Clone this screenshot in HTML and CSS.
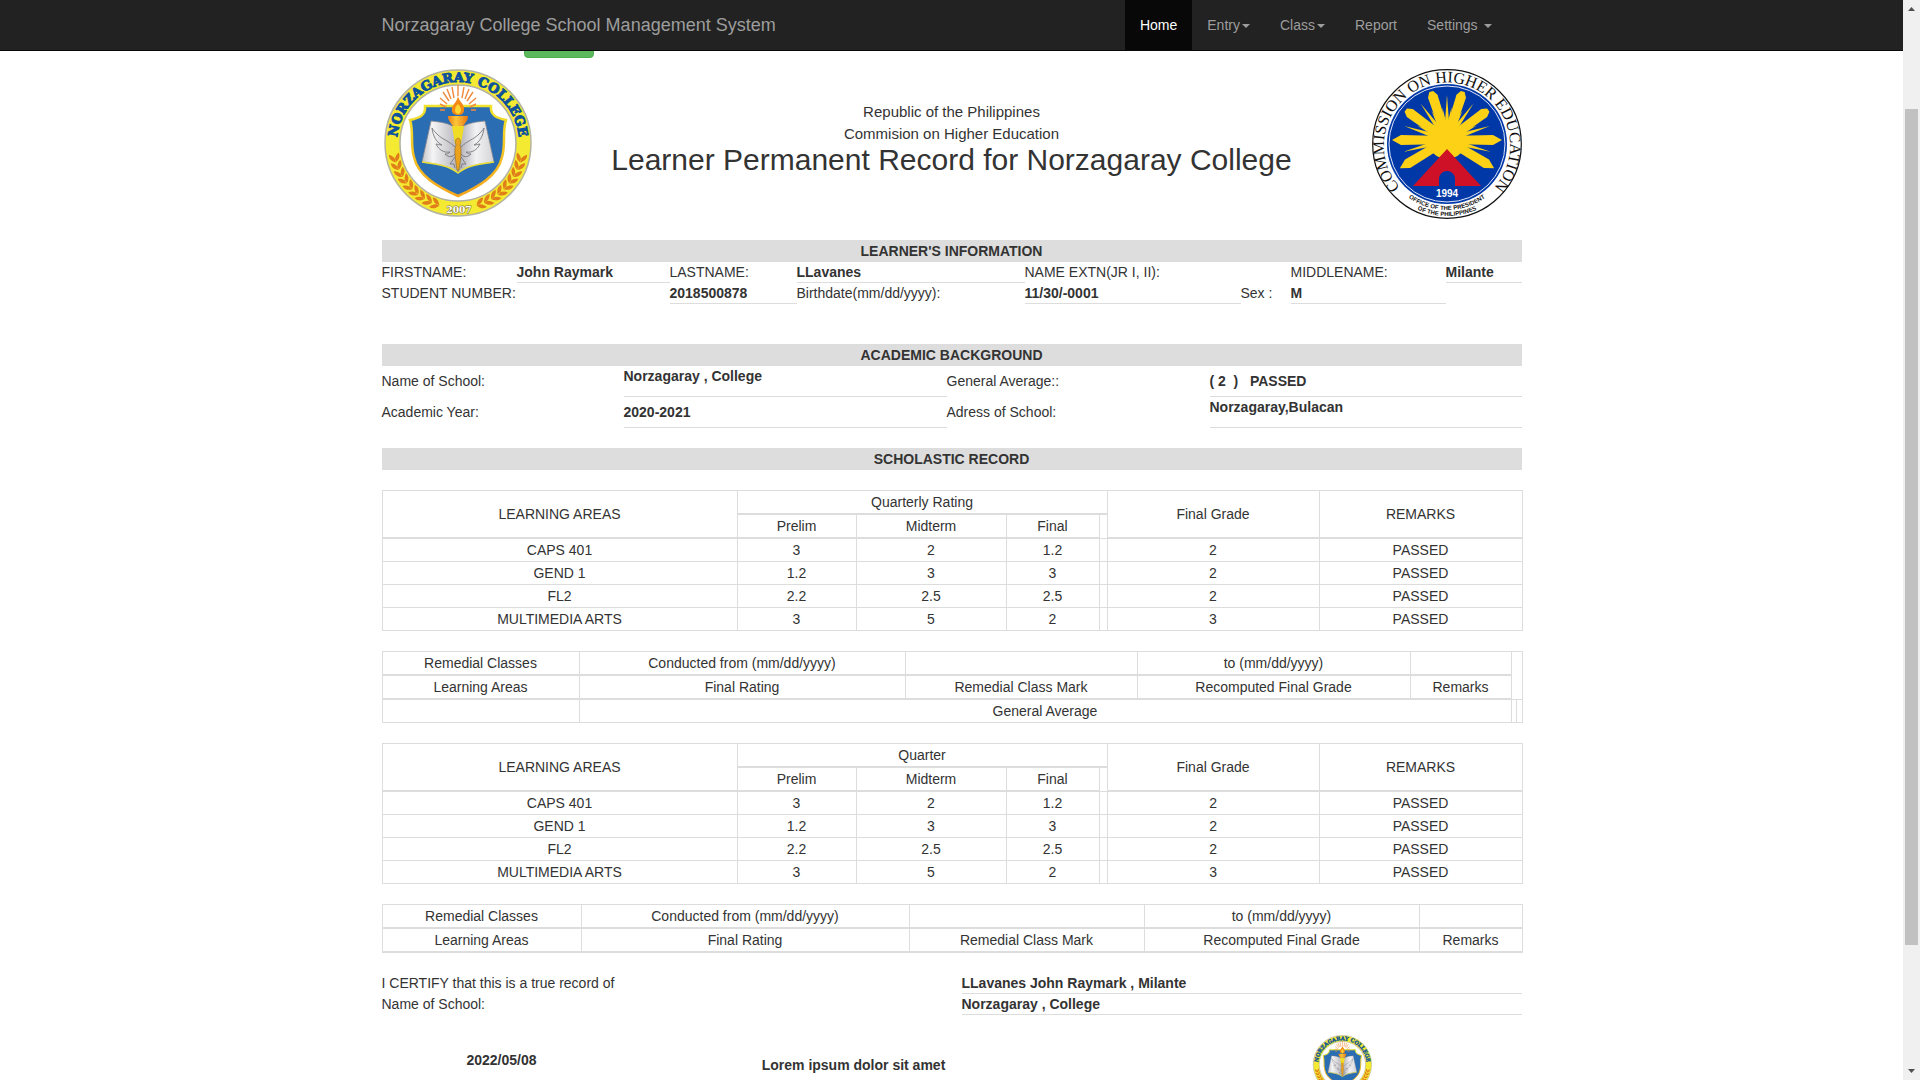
FILE: index.html
```html
<!DOCTYPE html>
<html lang="en">
<head>
<meta charset="utf-8">
<meta name="viewport" content="width=device-width, initial-scale=1">
<title>Norzagaray College School Management System</title>
<link rel="stylesheet" href="styles.css">
</head>
<body>
<svg class="defs" aria-hidden="true">
  <defs>
    <path id="nc-arc" d="M15 78L15 74A61 61 0 0 1 137 74L137 78"/>
    <linearGradient id="page-l" x1="0" x2="1"><stop offset="0" stop-color="#c4c4c8"/><stop offset=".3" stop-color="#f4f4f5"/><stop offset="1" stop-color="#b4b4ba"/></linearGradient>
    <linearGradient id="page-r" x1="0" x2="1"><stop offset="0" stop-color="#a9a9b0"/><stop offset=".5" stop-color="#f2f2f4"/><stop offset="1" stop-color="#d4d4d8"/></linearGradient>
    <linearGradient id="gold" x1="0" x2="0" y1="0" y2="1"><stop offset="0" stop-color="#f0e32c"/><stop offset="1" stop-color="#f6a51c"/></linearGradient>
    <linearGradient id="cup" x1="0" x2="1"><stop offset="0" stop-color="#ef7d12"/><stop offset=".4" stop-color="#fcc63a"/><stop offset="1" stop-color="#e87511"/></linearGradient>
    <g id="leaf">
      <path d="M6 70C5 74 7 77 11 79C12 76 10 72 6 70ZM16 70C17 74 15 77 11 79C10 76 12 72 16 70Z" fill="#e07f1a"/>
    </g>
    <g id="laurel">
      <use href="#leaf" transform="rotate(-13 76 74)"/><use href="#leaf" transform="rotate(-20 76 74)"/>
      <use href="#leaf" transform="rotate(-27 76 74)"/><use href="#leaf" transform="rotate(-34 76 74)"/>
      <use href="#leaf" transform="rotate(-41 76 74)"/><use href="#leaf" transform="rotate(-48 76 74)"/>
      <use href="#leaf" transform="rotate(-55 76 74)"/><use href="#leaf" transform="rotate(-62 76 74)"/>
      <use href="#leaf" transform="rotate(-69 76 74)"/>
    </g>
    <g id="half-rays" stroke="#f08a3c" stroke-width="1.400">
      <path d="M72 29L70 18M69 30L65 20M67 32L61 23M65 35L58 29M64 38L58 35M63 41L58 41"/>
    </g>
    <g id="wing" fill="none" stroke="#77777e" stroke-width=".9">
      <path d="M73 78C67 72 60 70 56 66C53 63 51 61 50 59C51 67 54 73 60 76C57 76 55 75 54 75C57 81 62 84 68 83C66 85 65 85 63 85C67 89 71 88 73 85M73 88L68 95L72 95L73 99"/>
    </g>
    <symbol id="nc-seal" viewBox="0 0 150 150">
      <circle cx="76" cy="74" r="73" fill="#f3ea31" stroke="#b5b4a0" stroke-width="1.500"/>
      <circle cx="76" cy="74" r="58" fill="#fff" stroke="#b3b1a4" stroke-width="1.500"/>
      <path d="M43 37H109C108 46 114 49 124 51C120 63 124 75 120 88C116 107 96 118 76 127C56 118 36 107 32 88C28 75 32 63 28 51C38 49 44 46 43 37Z" fill="#2a6db2" stroke="url(#gold)" stroke-width="2.500"/>
      <path d="M76 61C67 53 57 53 49 52L40 93C53 95 66 96 76 104Z" fill="url(#page-l)" stroke="#85858c" stroke-width=".8"/>
      <path d="M76 61C85 53 95 53 103 52L112 93C99 95 86 96 76 104Z" fill="url(#page-r)" stroke="#85858c" stroke-width=".8"/>
      <path d="M40 93C53 95 66 96 76 104C86 96 99 95 112 93" fill="none" stroke="#e9df35" stroke-width="1.500"/>
      <use href="#half-rays"/><use href="#half-rays" transform="matrix(-1 0 0 1 152 0)"/>
      <path d="M76 16V27" stroke="#f08a3c" stroke-width="1.400"/>
      <path d="M70 57H82L79 75H73Z" fill="#f0dc25"/>
      <use href="#wing"/><use href="#wing" transform="matrix(-1 0 0 1 152 0)"/>
      <path d="M76 69C79 70 79 73 78 76C80 80 79 88 77 101H75C73 88 72 80 74 76C73 73 73 70 76 69Z" fill="#eba21c" stroke="#8a6a25" stroke-width=".6"/>
      <path d="M66 47H86C86 52 83 54 81 57H71C69 54 66 52 66 47Z" fill="url(#cup)"/>
      <path d="M76 27C77 33 83 35 82 41C82 45 79 46 76 46C72 46 69 44 70 39C71 35 75 33 76 27Z" fill="#f58a14"/>
      <path d="M76 35C80 39 80 44 76 45C72 44 72 39 76 35Z" fill="#fcd733"/>
      <use href="#laurel"/><use href="#laurel" transform="matrix(-1 0 0 1 152 0)"/>
      <text class="nc-name"><textPath href="#nc-arc" startOffset="50%">NORZAGARAY COLLEGE</textPath></text>
      <text class="nc-year" x="77" y="144">2007</text>
    </symbol>
    <path id="ched-arc" d="M26 116A63 63 0 1 1 124 116"/>
    <path id="ched-low1" d="M9 75A66 66 0 0 0 141 75"/>
    <path id="ched-low2" d="M3 75A72 72 0 0 0 147 75"/>
    <path id="ray" d="M71 70L70 25L75 16L80 25L79 70Z"/>
    <path id="ray-short" d="M71 70L70 25L73 20H77L80 25L79 70Z"/>
    <path id="spike" d="M72 66L75 26L78 66Z"/>
    <path id="spike-short" d="M72 66L75 38L78 66Z"/>
    <symbol id="ched-seal" viewBox="0 0 150 150">
      <circle cx="75" cy="75" r="74.300" fill="#fff" stroke="#111" stroke-width="1.200"/>
      <circle cx="75" cy="75" r="60" fill="#0038a8"/>
      <circle cx="75" cy="75" r="58" fill="none" stroke="#dfe7f7" stroke-width="1"/>
      <g fill="#fcd116">
        <circle cx="75" cy="71" r="19"/>
        <use href="#ray-short" transform="rotate(-18 75 71)"/><use href="#ray-short" transform="rotate(18 75 71)"/>
        <use href="#ray-short" transform="rotate(-54 75 71)"/><use href="#ray-short" transform="rotate(54 75 71)"/>
        <use href="#ray" transform="rotate(-90 75 71)"/><use href="#ray" transform="rotate(90 75 71)"/>
        <use href="#ray" transform="rotate(-121 75 71)"/><use href="#ray" transform="rotate(121 75 71)"/>
        <use href="#spike"/>
        <use href="#spike" transform="rotate(-36 75 71)"/><use href="#spike" transform="rotate(36 75 71)"/>
        <use href="#spike" transform="rotate(-72 75 71)"/><use href="#spike" transform="rotate(72 75 71)"/>
        <use href="#spike" transform="rotate(-105 75 71)"/><use href="#spike" transform="rotate(105 75 71)"/>
        <use href="#spike-short" transform="rotate(-8 75 71)"/><use href="#spike-short" transform="rotate(8 75 71)"/>
        <use href="#spike-short" transform="rotate(-28 75 71)"/><use href="#spike-short" transform="rotate(28 75 71)"/>
        <use href="#spike-short" transform="rotate(-64 75 71)"/><use href="#spike-short" transform="rotate(64 75 71)"/>
      </g>
      <path d="M75 80L109 117H83V110A8 8 0 0 0 67 110V117H41Z" fill="#ce1126"/>
      <text class="ched-name"><textPath href="#ched-arc" startOffset="50%">COMMISSION ON HIGHER EDUCATION</textPath></text>
      <text class="ched-year" x="75" y="128">1994</text>
      <text class="ched-office"><textPath href="#ched-low1" startOffset="50%">OFFICE OF THE PRESIDENT</textPath></text>
      <text class="ched-office"><textPath href="#ched-low2" startOffset="50%">OF THE PHILIPPINES</textPath></text>
    </symbol>
  </defs>
</svg>

<div class="viewport">
  <nav class="navbar">
    <div class="container navbar-inner">
      <a class="brand" href="#">Norzagaray College School Management System</a>
      <ul class="menu">
        <li><a class="active" href="#">Home</a></li>
        <li><a href="#">Entry<span class="caret"></span></a></li>
        <li><a href="#">Class<span class="caret"></span></a></li>
        <li><a href="#">Report</a></li>
        <li><a href="#">Settings <span class="caret"></span></a></li>
      </ul>
    </div>
  </nav>

  <main class="container record">
    <button class="print-btn" type="button" aria-label="Print"></button>

    <header class="letterhead">
      <svg class="seal" role="img" aria-label="Norzagaray College"><use href="#nc-seal"/></svg>
      <div class="letterhead-text">
        <p>Republic of the Philippines</p>
        <p>Commision on Higher Education</p>
        <h1>Learner Permanent Record for Norzagaray College</h1>
      </div>
      <svg class="seal" role="img" aria-label="Commission on Higher Education"><use href="#ched-seal"/></svg>
    </header>

    <h2 class="bar">LEARNER'S INFORMATION</h2>
    <table class="info learner">
      <colgroup><col class="w135"><col class="w153"><col class="w127"><col class="w228"><col class="w216"><col class="w50"><col class="w155"><col class="w76"></colgroup>
      <tr>
        <th>FIRSTNAME:</th><td class="line">John Raymark</td>
        <th>LASTNAME:</th><td class="line">LLavanes</td>
        <th colspan="2">NAME EXTN(JR I, II):</th>
        <th>MIDDLENAME:</th><td class="line">Milante</td>
      </tr>
      <tr>
        <th colspan="2">STUDENT NUMBER:</th><td class="line">2018500878</td>
        <th>Birthdate(mm/dd/yyyy):</th><td class="line">11/30/-0001</td>
        <th>Sex :</th><td class="line">M</td><td></td>
      </tr>
    </table>

    <h2 class="bar">ACADEMIC BACKGROUND</h2>
    <table class="info academic">
      <colgroup><col class="w242"><col class="w323"><col class="w263"><col class="w312"></colgroup>
      <tr>
        <th>Name of School:</th><td class="line"><p>Norzagaray , College</p></td>
        <th>General Average::</th><td class="line">( 2&nbsp; )&nbsp;&nbsp; PASSED</td>
      </tr>
      <tr>
        <th>Academic Year:</th><td class="line">2020-2021</td>
        <th>Adress of School:</th><td class="line"><p>Norzagaray,Bulacan</p></td>
      </tr>
    </table>

    <h2 class="bar">SCHOLASTIC RECORD</h2>
    <table class="grid first-grid">
      <colgroup><col class="w355"><col class="w119"><col class="w150"><col class="w93"><col class="w8"><col class="w212"><col class="w203"></colgroup>
      <thead>
        <tr><th rowspan="2">LEARNING AREAS</th><th colspan="4">Quarterly Rating</th><th rowspan="2">Final Grade</th><th rowspan="2">REMARKS</th></tr>
        <tr><th>Prelim</th><th>Midterm</th><th>Final</th></tr>
      </thead>
      <tbody>
        <tr><td>CAPS 401</td><td>3</td><td>2</td><td>1.2</td><td></td><td>2</td><td>PASSED</td></tr>
        <tr><td>GEND 1</td><td>1.2</td><td>3</td><td>3</td><td></td><td>2</td><td>PASSED</td></tr>
        <tr><td>FL2</td><td>2.2</td><td>2.5</td><td>2.5</td><td></td><td>2</td><td>PASSED</td></tr>
        <tr><td>MULTIMEDIA ARTS</td><td>3</td><td>5</td><td>2</td><td></td><td>3</td><td>PASSED</td></tr>
      </tbody>
    </table>

    <table class="grid">
      <colgroup><col class="w197"><col class="w326"><col class="w232"><col class="w273"><col class="w101"><col class="w5"><col class="w6"></colgroup>
      <thead>
        <tr><th>Remedial Classes</th><th>Conducted from (mm/dd/yyyy)</th><th></th><th>to (mm/dd/yyyy)</th><th></th></tr>
        <tr><th>Learning Areas</th><th>Final Rating</th><th>Remedial Class Mark</th><th>Recomputed Final Grade</th><th>Remarks</th></tr>
      </thead>
      <tbody>
        <tr><td></td><td colspan="4">General Average</td><td></td><td></td></tr>
      </tbody>
    </table>

    <table class="grid">
      <colgroup><col class="w355"><col class="w119"><col class="w150"><col class="w93"><col class="w8"><col class="w212"><col class="w203"></colgroup>
      <thead>
        <tr><th rowspan="2">LEARNING AREAS</th><th colspan="4">Quarter</th><th rowspan="2">Final Grade</th><th rowspan="2">REMARKS</th></tr>
        <tr><th>Prelim</th><th>Midterm</th><th>Final</th></tr>
      </thead>
      <tbody>
        <tr><td>CAPS 401</td><td>3</td><td>2</td><td>1.2</td><td></td><td>2</td><td>PASSED</td></tr>
        <tr><td>GEND 1</td><td>1.2</td><td>3</td><td>3</td><td></td><td>2</td><td>PASSED</td></tr>
        <tr><td>FL2</td><td>2.2</td><td>2.5</td><td>2.5</td><td></td><td>2</td><td>PASSED</td></tr>
        <tr><td>MULTIMEDIA ARTS</td><td>3</td><td>5</td><td>2</td><td></td><td>3</td><td>PASSED</td></tr>
      </tbody>
    </table>

    <table class="grid">
      <colgroup><col class="w199"><col class="w328"><col class="w235"><col class="w275"><col class="w103"></colgroup>
      <thead>
        <tr><th>Remedial Classes</th><th>Conducted from (mm/dd/yyyy)</th><th></th><th>to (mm/dd/yyyy)</th><th></th></tr>
        <tr><th>Learning Areas</th><th>Final Rating</th><th>Remedial Class Mark</th><th>Recomputed Final Grade</th><th>Remarks</th></tr>
      </thead>
    </table>

    <table class="info certify">
      <colgroup><col class="w580"><col class="w560"></colgroup>
      <tr><th>I CERTIFY that this is a true record of</th><td class="line">LLavanes John Raymark , Milante</td></tr>
      <tr><th>Name of School:</th><td class="line">Norzagaray , College</td></tr>
    </table>

    <footer class="signoff">
      <p class="date">2022/05/08</p>
      <p>Lorem ipsum dolor sit amet</p>
      <div class="stamp"><svg class="seal-small" role="img" aria-label="Norzagaray College"><use href="#nc-seal"/></svg></div>
    </footer>
  </main>
</div>

<div class="scrollbar" aria-hidden="true">
  <svg class="arrow" viewBox="0 0 17 17"><path d="M5 11H12L8.500 7Z"/></svg>
  <div class="track"><div class="thumb"></div></div>
  <svg class="arrow" viewBox="0 0 17 17"><path d="M5 6H12L8.500 10Z"/></svg>
</div>
</body>
</html>
```

FILE: styles.css
```css
* { box-sizing: border-box; }

body {
  display: flex;
  height: 100vh;
  margin: 0;
  overflow: hidden;
  background: #fff;
  color: #333;
  font: 14px/20px "Liberation Sans", Arial, sans-serif;
}

p, h1, h2, ul { margin: 0; padding: 0; font-weight: inherit; }
a { color: inherit; text-decoration: none; }
.defs { position: absolute; width: 0; height: 0; }

.viewport { position: relative; flex: 1; min-width: 0; overflow: hidden; }

.container {
  width: 100%;
  max-width: 1170px;
  margin: 0 auto;
  padding: 0 15px;
}

/* top navigation */
.navbar {
  position: absolute;
  top: 0;
  left: 0;
  right: 0;
  z-index: 1;
  background: #222;
  border-bottom: 1px solid #080808;
  color: #9d9d9d;
}
.navbar-inner { display: flex; justify-content: space-between; }
.brand { padding: 15px 0; font-size: 18px; }
.menu { display: flex; padding-right: 15px; list-style: none; }
.menu a { display: block; padding: 15px; }
.menu .active { background: #080808; color: #fff; }
.caret {
  display: inline-block;
  margin-left: 2px;
  vertical-align: middle;
  border: 4px solid transparent;
  border-top-color: currentColor;
  border-bottom: 0;
}

/* record header */
.record { padding-top: 24px; }
.print-btn {
  display: block;
  width: 70px;
  height: 34px;
  margin: 0 0 11px 142px;
  background: #5cb85c;
  border: 1px solid #4cae4c;
  border-radius: 4px;
}
.letterhead {
  display: flex;
  justify-content: space-between;
  margin-bottom: 21px;
}
.seal { width: 150px; height: 150px; }
.letterhead-text {
  flex: 1;
  padding-top: 32px;
  text-align: center;
  font-size: 15px;
  line-height: 22px;
}
.letterhead h1 { font-size: 30px; line-height: 30px; }

.bar {
  padding: 1px 0;
  background: #ddd;
  font-size: 14px;
  font-weight: bold;
  text-align: center;
}

/* label and value tables */
table { width: 100%; table-layout: fixed; border-collapse: collapse; }
.info { border-collapse: separate; border-spacing: 0; }
.info th, .info td { padding: 0; text-align: left; white-space: nowrap; border-bottom: 1px solid transparent; }
.info th { font-weight: normal; }
.info td { font-weight: bold; }
.info .line { border-bottom-color: #ddd; }
.learner { margin-bottom: 40px; }
.academic { margin-bottom: 20px; }
.academic tr { height: 31px; }
.academic p { margin-bottom: 10px; }

/* bordered grade tables */
.grid { margin-bottom: 20px; border: 1px solid #ddd; text-align: center; }
.first-grid { margin-top: 20px; }
.grid th, .grid td { padding: 1px; border: 1px solid #ddd; font-weight: normal; }
.grid th { border-bottom-width: 2px; vertical-align: middle; }

.w5 { width: 5px; }
.w6 { width: 6px; }
.w8 { width: 8px; }
.w50 { width: 50px; }
.w76 { width: 76px; }
.w93 { width: 93px; }
.w101 { width: 101px; }
.w103 { width: 103px; }
.w119 { width: 119px; }
.w127 { width: 127px; }
.w135 { width: 135px; }
.w150 { width: 150px; }
.w153 { width: 153px; }
.w155 { width: 155px; }
.w197 { width: 197px; }
.w199 { width: 199px; }
.w203 { width: 203px; }
.w212 { width: 212px; }
.w216 { width: 216px; }
.w228 { width: 228px; }
.w232 { width: 232px; }
.w235 { width: 235px; }
.w242 { width: 242px; }
.w263 { width: 263px; }
.w273 { width: 273px; }
.w275 { width: 275px; }
.w312 { width: 312px; }
.w323 { width: 323px; }
.w326 { width: 326px; }
.w328 { width: 328px; }
.w355 { width: 355px; }
.w560 { width: 560px; }
.w580 { width: 580px; }

/* sign-off row */
.signoff {
  display: grid;
  grid-template-columns: 240fr 464fr 436fr;
  align-items: center;
  margin-top: 20px;
  font-weight: bold;
  text-align: center;
}
.date { margin-bottom: 10px; }
.stamp { display: flex; justify-content: center; padding-left: 76px; }
.seal-small { width: 60px; height: 60px; }

/* seal lettering */
.nc-name { fill: #0d529c; stroke: #0d529c; stroke-width: 1px; font: bold 13px "DejaVu Serif", serif; text-anchor: middle; }
.nc-year { fill: #fff; stroke: #77714a; stroke-width: 1px; paint-order: stroke; font: bold 9px "DejaVu Serif", serif; text-anchor: middle; }
.ched-name { fill: #111; font: 16px "Liberation Serif", serif; text-anchor: middle; }
.ched-year { fill: #fff; font: bold 10px "Liberation Sans", sans-serif; text-anchor: middle; }
.ched-office { fill: #111; font: bold 6px "Liberation Sans", sans-serif; text-anchor: middle; }

/* scrollbar */
.scrollbar { display: flex; flex-direction: column; width: 17px; background: #f0f0f0; }
.arrow { width: 17px; height: 17px; fill: #505050; }
.track { display: flex; flex: 1; flex-direction: column; padding: 92px 2px 118px; }
.thumb { flex: 1; background: #c1c1c1; }
```
